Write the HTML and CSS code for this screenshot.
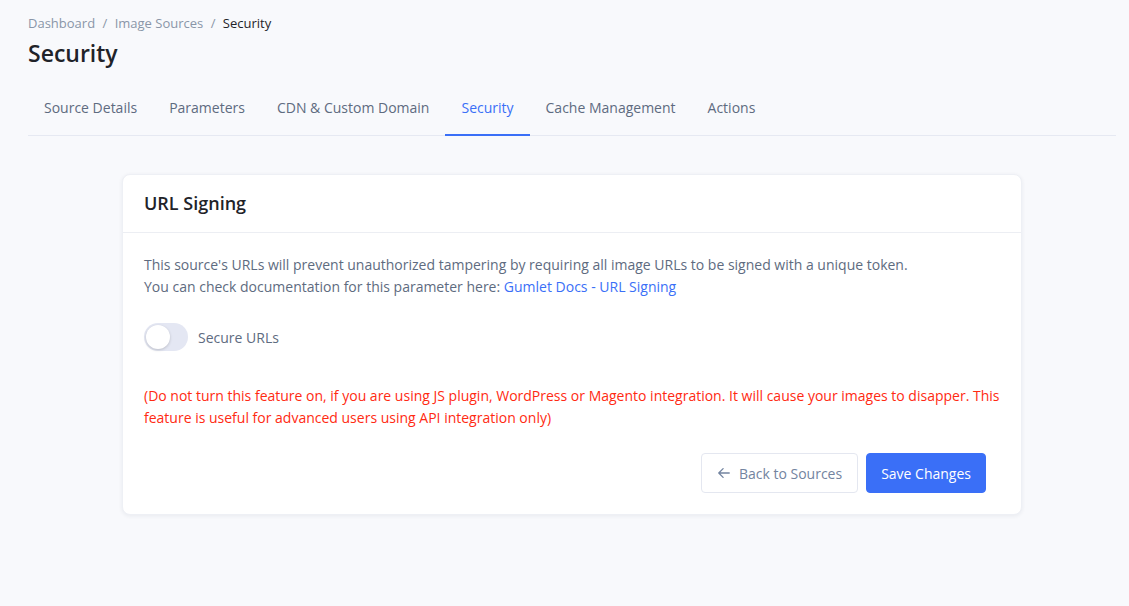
FILE: index.html
```html
<!DOCTYPE html>
<html lang="en">
<head>
    <meta charset="UTF-8">
    <title>Security - Image Sources</title>
    <link rel="stylesheet" href="styles.css">
</head>
<body>
    <div class="page">
        <div class="breadcrumb">
            <a href="#">Dashboard</a>
            <span class="sep">/</span>
            <a href="#">Image Sources</a>
            <span class="sep">/</span>
            <span class="current">Security</span>
        </div>
        <h1>Security</h1>

        <div class="tabs">
            <a class="tab" href="#">Source Details</a>
            <a class="tab" href="#">Parameters</a>
            <a class="tab" href="#">CDN &amp; Custom Domain</a>
            <a class="tab active" href="#">Security</a>
            <a class="tab" href="#">Cache Management</a>
            <a class="tab" href="#">Actions</a>
        </div>

        <div class="card">
            <div class="card-header">URL Signing</div>
            <div class="card-body">
                <p class="desc">
                    This source's URLs will prevent unauthorized tampering by requiring all image URLs to be signed with a unique token.<br>
                    You can check documentation for this parameter here: <a href="#">Gumlet Docs - URL Signing</a>
                </p>

                <label class="switch-row">
                    <span class="switch"><span class="knob"></span></span>
                    <span class="switch-label">Secure URLs</span>
                </label>

                <p class="warning">(Do not turn this feature on, if you are using JS plugin, WordPress or Magento integration. It will cause your images to disapper. This feature is useful for advanced users using API integration only)</p>

                <div class="actions">
                    <button class="btn btn-light">
                        <svg width="14" height="14" viewBox="0 0 16 16" fill="none" stroke="currentColor" stroke-width="1.5" stroke-linecap="round" stroke-linejoin="round"><path d="M14 8H2M7 3L2 8l5 5"/></svg>
                        Back to Sources
                    </button>
                    <button class="btn btn-primary">Save Changes</button>
                </div>
            </div>
        </div>
    </div>
</body>
</html>
```

FILE: styles.css
```css
body {
    margin: 0;
    background-color: #f8f9fc;
    font-family: "Open Sans", "Noto Sans", sans-serif;
    color: #1f2329;
}
.page {
    padding: 14px 13px 40px 28px;
}
a {
    text-decoration: none;
}
.breadcrumb {
    font-size: 13px;
    line-height: 18px;
    color: #8a96a8;
}
.breadcrumb a {
    color: #8a96a8;
}
.breadcrumb .sep {
    margin: 0 4px;
}
.breadcrumb .current {
    color: #1f2329;
}
h1 {
    margin: 6px 0 0;
    font-size: 23px;
    line-height: 30px;
    font-weight: 600;
    color: #1f2329;
}
.tabs {
    display: flex;
    margin-top: 23px;
    border-bottom: 1px solid #e6e9f2;
}
.tab {
    padding: 7px 16px 17px;
    font-size: 14px;
    line-height: 19px;
    color: #5e6b80;
    border-bottom: 2px solid transparent;
    margin-bottom: -1px;
}
.tab.active {
    color: #3a6ff7;
    border-bottom-color: #3a6ff7;
}
.card {
    width: 900px;
    margin: 38px auto 0;
    background: #fff;
    border-radius: 8px;
    box-shadow: 0 1px 4px rgba(30, 40, 70, 0.07);
    border: 1px solid #eef0f5;
    box-sizing: border-box;
}
.card-header {
    padding: 16px 21px 17px;
    font-size: 18px;
    line-height: 24px;
    font-weight: 600;
    color: #1f2329;
    border-bottom: 1px solid #eceef3;
}
.card-body {
    padding: 21px 20px 21px 21px;
}
.desc {
    margin: 0;
    font-size: 14px;
    line-height: 22px;
    color: #5e6b80;
}
.desc a {
    color: #3a6ff7;
}
.switch-row {
    display: flex;
    align-items: center;
    margin-top: 25px;
}
.switch {
    position: relative;
    width: 44px;
    height: 28px;
    border-radius: 14px;
    background: #e4e7f3;
}
.knob {
    position: absolute;
    left: 2px;
    top: 2px;
    width: 24px;
    height: 24px;
    border-radius: 50%;
    background: #fff;
    box-shadow: 0 1px 3px rgba(0, 0, 0, 0.18);
}
.switch-label {
    margin-left: 10px;
    font-size: 14px;
    color: #5e6b80;
}
.warning {
    margin: 34px 0 0;
    font-size: 14px;
    line-height: 22px;
    color: #ff2a12;
}
.actions {
    display: flex;
    justify-content: flex-end;
    gap: 8px;
    margin-top: 24px;
    padding-right: 15px;
}
.btn {
    height: 40px;
    padding: 0 14px;
    border-radius: 4px;
    font-family: inherit;
    font-size: 14px;
    display: flex;
    align-items: center;
    gap: 8px;
    cursor: pointer;
}
.btn-light {
    background: #fff;
    border: 1px solid #e4e7f0;
    color: #7384a0;
    padding: 0 15px;
}
.btn-primary {
    background: #3a6ff7;
    border: 1px solid #3a6ff7;
    color: #fff;
}
```
